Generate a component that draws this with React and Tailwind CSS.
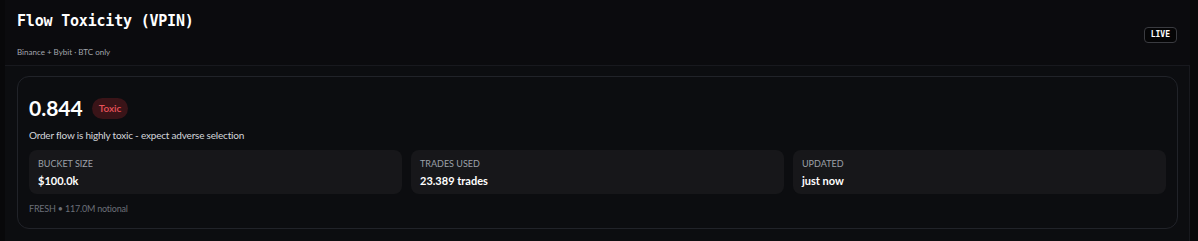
const stats = [
  { label: 'Bucket size', value: '$100.0k' },
  { label: 'Trades used', value: '23.389 trades' },
  { label: 'Updated', value: 'just now' },
];

const App = () => {
  return (
    <div className="w-[1198px] h-[241px] overflow-hidden bg-[#08080a] pl-[5px] pr-[8px] font-['Lato',sans-serif]">
      <div className="h-full flex flex-col bg-[#0b0b0e]">
        <header className="h-[65px] shrink-0 flex items-center justify-between px-3">
          <div className="flex flex-col pt-[2px]">
            <h1 className="font-['DejaVu_Sans_Mono',monospace] font-bold text-[15px] leading-6 tracking-[-0.2px] text-white">
              Flow Toxicity (VPIN)
            </h1>
            <p className="mt-3 text-[8px] leading-[14px] text-[#a3a6ad]">Binance + Bybit · BTC only</p>
          </div>
          <span className="mt-[5px] mr-[1px] px-[6px] h-4 flex items-center rounded-sm border border-[#3a3b40] bg-[#050506] font-['DejaVu_Sans_Mono',monospace] font-bold text-[8px] text-white">
            LIVE
          </span>
        </header>

        <section className="flex-1 border-t border-r border-[#18191e] bg-[#0c0d10] pl-3 pr-[11px] pt-[10px]">
          <div className="rounded-xl border border-[#212329] bg-[#0c0d10] px-[11px] pt-[19px] pb-3">
            <div className="flex items-center gap-[9px] h-6">
              <span className="text-[21px] font-bold text-white leading-6">0.844</span>
              <span className="h-[21px] px-[7px] flex items-center rounded-full bg-[#3a1418] text-[10px] font-semibold text-[#e8525a]">
                Toxic
              </span>
            </div>
            <p className="mt-[7px] text-[10px] tracking-[-0.2px] leading-4 text-[#d4d6db]">
              Order flow is highly toxic - expect adverse selection
            </p>
            <div className="mt-[7px] grid grid-cols-3 gap-[9px]">
              {stats.map((s) => (
                <div key={s.label} className="h-[44px] rounded-lg bg-[#17171a] px-[9px] pt-[8px]">
                  <div className="text-[9px] leading-[11px] uppercase text-[#9ca0a8]">{s.label}</div>
                  <div className="mt-[5px] text-[11px] leading-[14px] font-bold text-white">{s.value}</div>
                </div>
              ))}
            </div>
            <p className="mt-2 text-[9px] tracking-[-0.2px] leading-[14px] text-[#6b6f78]">FRESH • 117.0M notional</p>
          </div>
        </section>
      </div>
    </div>
  );
};

export default App;
